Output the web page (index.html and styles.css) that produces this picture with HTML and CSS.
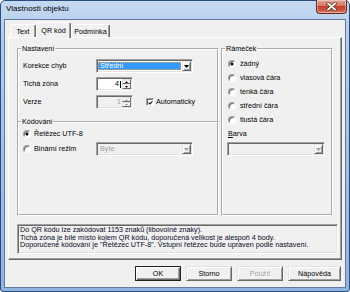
FILE: index.html
```html
<!DOCTYPE html>
<html lang="cs">
<head>
<meta charset="utf-8">
<title>Vlastnosti objektu</title>
<link rel="stylesheet" href="styles.css">
</head>
<body>
<div class="window">
  <div class="titlebar">
    <span class="title">Vlastnosti objektu</span>
    <div class="close">
      <svg width="11" height="9" viewBox="0 0 11 9"><path d="M2 1.5 L9 7.5 M9 1.5 L2 7.5" stroke="#5a2a20" stroke-width="3.2" stroke-linecap="square"/><path d="M2 1.5 L9 7.5 M9 1.5 L2 7.5" stroke="#fff" stroke-width="1.8" stroke-linecap="square"/></svg>
    </div>
  </div>
  <div class="client">
    <div class="tabs">
      <div class="tab tab-text">Text</div>
      <div class="tab tab-qr active">QR kód</div>
      <div class="tab tab-cond">Podmínka</div>
    </div>
    <div class="panel">
      <div class="groups">
        <div class="col-left">
          <fieldset class="group g-settings">
            <legend>Nastavení</legend>
            <div class="form">
              <div class="row">
                <span class="lbl">Korekce chyb</span>
                <div class="combo combo-wide">
                  <span class="val selected">Střední</span>
                  <span class="drop"><svg width="5" height="3" viewBox="0 0 5 3"><polygon points="0,0 5,0 2.5,3" fill="#000"/></svg></span>
                </div>
              </div>
              <div class="row">
                <span class="lbl">Tichá zóna</span>
                <div class="spin">
                  <span class="num">4</span><span class="caret"></span>
                  <span class="arrows">
                    <span class="arr"><svg width="3" height="2" viewBox="0 0 3 2"><polygon points="1.5,0 3,2 0,2" fill="#000"/></svg></span>
                    <span class="arr"><svg width="3" height="2" viewBox="0 0 3 2"><polygon points="0,0 3,0 1.5,2" fill="#000"/></svg></span>
                  </span>
                </div>
              </div>
              <div class="row">
                <span class="lbl">Verze</span>
                <div class="spin disabled">
                  <span class="num">1</span>
                  <span class="arrows">
                    <span class="arr"><svg width="3" height="2" viewBox="0 0 3 2"><polygon points="1.5,0 3,2 0,2" fill="#a0a0a0"/></svg></span>
                    <span class="arr"><svg width="3" height="2" viewBox="0 0 3 2"><polygon points="0,0 3,0 1.5,2" fill="#a0a0a0"/></svg></span>
                  </span>
                </div>
                <span class="checkbox"><svg width="6" height="6" viewBox="0 0 6 6"><path d="M0.8 2.6 L2.3 4.2 L5.3 1.0" stroke="#000" stroke-width="1.3" fill="none"/></svg></span>
                <span class="check-lbl">Automaticky</span>
              </div>
            </div>
          </fieldset>
          <fieldset class="group g-encoding">
            <legend>Kódování</legend>
            <div class="enc">
              <div class="rrow r-first"><span class="radio on"></span><span class="rlbl">Řetězec UTF-8</span></div>
              <div class="rrow r-combo">
                <span class="rpart"><span class="radio"></span><span class="rlbl">Binární režim</span></span>
                <div class="combo combo-wide disabled">
                  <span class="val">Byte</span>
                  <span class="drop"><svg width="5" height="3" viewBox="0 0 5 3"><polygon points="0,0 5,0 2.5,3" fill="#a0a0a0"/></svg></span>
                </div>
              </div>
            </div>
          </fieldset>
        </div>
        <fieldset class="group g-frame">
          <legend>Rámeček</legend>
          <div class="frame-list">
            <div class="frow f-first"><span class="radio on"></span><span class="rlbl">žádný</span></div>
            <div class="frow"><span class="radio"></span><span class="rlbl">vlasová čára</span></div>
            <div class="frow"><span class="radio"></span><span class="rlbl">tenká čára</span></div>
            <div class="frow"><span class="radio"></span><span class="rlbl">střední čára</span></div>
            <div class="frow"><span class="radio"></span><span class="rlbl">tlustá čára</span></div>
            <div class="frow color-lbl"><span><u>B</u>arva</span></div>
            <div class="combo combo-color disabled">
              <span class="val"></span>
              <span class="drop"><svg width="5" height="3" viewBox="0 0 5 3"><polygon points="0,0 5,0 2.5,3" fill="#a0a0a0"/></svg></span>
            </div>
          </div>
        </fieldset>
      </div>
      <div class="info">
        <div>Do QR kódu lze zakódovat 1153 znaků (libovolné znaky).</div>
        <div>Tichá zóna je bílé místo kolem QR kódu, doporučená velikost je alespoň 4 body.</div>
        <div>Doporučené kódování je "Řetězec UTF-8". Vstupní řetězec bude upraven podle nastavení.</div>
      </div>
    </div>
    <div class="buttons">
      <div class="btn default">OK</div>
      <div class="btn">Storno</div>
      <div class="btn disabled">Použít</div>
      <div class="btn btn-help">Nápověda</div>
    </div>
  </div>
</div>
</body>
</html>
```

FILE: styles.css
```css
* { box-sizing: border-box; }
html, body { margin: 0; padding: 0; background: #fff; }
body {
  font-family: "Liberation Sans", Arial, sans-serif;
  font-size: 7.2px;
  color: #000;
}
.window {
  width: 350px;
  height: 292px;
  display: flex;
  flex-direction: column;
  border: 1px solid #2a4c7e;
  border-radius: 5px 5px 3px 3px;
  background: linear-gradient(#c6d9f1, #b4cdec 12%, #9fbfe8 60%, #8fb3e2);
  padding: 0 3px 3px 3px;
}
.titlebar {
  height: 18px;
  display: flex;
  align-items: flex-start;
  flex: none;
}
.title {
  font-size: 8px;
  line-height: 8px;
  margin: 4px 0 0 2px;
  color: #000;
}
.close {
  margin-left: auto;
  margin-top: -1px;
  margin-right: -1px;
  width: 31px;
  height: 14px;
  border: 1px solid #6b2a20;
  border-top: none;
  border-radius: 0 0 4px 4px;
  background: linear-gradient(#e6a496, #d27663 45%, #c2412b 50%, #c95a44 80%, #de8a72);
  display: flex;
  align-items: center;
  justify-content: center;
  box-shadow: inset 0 0 0 1px rgba(255,255,255,0.35);
}
.close svg { display: block; }
.client {
  flex: 1;
  background: #f0f0f0;
  border: 1px solid #5f7aa2;
  padding: 2px 3px 0 3px;
  display: flex;
  flex-direction: column;
}
.tabs {
  display: flex;
  height: 15px;
  padding-left: 2px;
  flex: none;
}
.tab {
  height: 13px;
  margin-top: 2px;
  border-top: 1px solid #fff;
  border-left: 1px solid #fff;
  border-right: 1px solid #696969;
  box-shadow: inset -1px 0 0 #a0a0a0;
  border-radius: 2px 2px 0 0;
  background: #f0f0f0;
  display: flex;
  justify-content: center;
  align-items: center;
  padding-top: 2px;
  line-height: 8px;
}
.tab-text { width: 26px; }
.tab-qr { width: 35px; }
.tab-cond { width: 39px; }
.tab.active {
  height: 16px;
  margin-top: 0;
  padding-top: 0;
  position: relative;
  z-index: 1;
}
.panel {
  flex: none;
  height: 223px;
  border-top: 1px solid #fff;
  border-left: 1px solid #fff;
  border-right: 1px solid #696969;
  border-bottom: 1px solid #696969;
  box-shadow: inset -1px -1px 0 #a0a0a0;
  padding: 7px 8px 5px 8px;
  display: flex;
  flex-direction: column;
}
.groups {
  display: grid;
  grid-template-columns: 202px 112px;
  column-gap: 2px;
  height: 171px;
}
.col-left {
  display: flex;
  flex-direction: column;
}
fieldset.group {
  margin: 0;
  padding: 0;
  border: 2px groove #fff;
  min-width: 0;
}
fieldset.group legend {
  padding: 0 1px;
  margin-left: 2px;
  line-height: 8px;
  height: 8px;
  font-size: 7.2px;
}
.g-settings { border-bottom: none !important; }
.g-encoding { margin-top: -5px !important; flex: 1; }
.form {
  padding: 6px 0 14px 4px;
  display: flex;
  flex-direction: column;
  gap: 4px;
}
.row {
  height: 14px;
  display: flex;
  align-items: center;
}
.lbl { width: 73px; flex: none; line-height: 8px; }

.combo {
  height: 14px;
  border: 1px solid;
  border-color: #a0a0a0 #fff #fff #a0a0a0;
  box-shadow: inset 1px 1px 0 #696969, inset -1px -1px 0 #e3e3e3;
  background: #fff;
  display: flex;
  padding: 1px;
}
.combo-wide { width: 97px; flex: none; }
.combo.disabled { background: #f0f0f0; color: #a0a0a0; }
.combo .val {
  flex: 1;
  line-height: 8px;
  padding-left: 2px;
  margin: 1px 1px 1px 0;
  display: flex;
  align-items: center;
}
.combo .val.selected {
  background: #3399ff;
  color: #fff;
  outline: 1px dotted #f2a545;
  outline-offset: -1px;
  padding-left: 2px;
}
.combo .drop {
  width: 9px;
  flex: none;
  background: #f0f0f0;
  border: 1px solid;
  border-color: #e3e3e3 #696969 #696969 #e3e3e3;
  box-shadow: inset 1px 1px 0 #fff, inset -1px -1px 0 #a0a0a0;
  display: flex;
  align-items: center;
  justify-content: center;
}
.combo .drop svg { display: block; }

.spin {
  width: 37px;
  height: 14px;
  flex: none;
  border: 1px solid;
  border-color: #a0a0a0 #fff #fff #a0a0a0;
  box-shadow: inset 1px 1px 0 #696969, inset -1px -1px 0 #e3e3e3;
  background: #fff;
  display: flex;
  align-items: stretch;
  padding: 1px;
}
.spin.disabled { background: #f0f0f0; color: #a0a0a0; }
.spin .num {
  flex: 1;
  text-align: right;
  line-height: 10px;
  padding-right: 1px;
}
.spin .caret {
  width: 1px;
  background: #000;
  margin: 2px 1px 1px 0;
}
.spin .arrows {
  width: 9px;
  flex: none;
  display: flex;
  flex-direction: column;
}
.spin .arr {
  flex: 1;
  background: #f0f0f0;
  border: 1px solid;
  border-color: #e3e3e3 #696969 #696969 #e3e3e3;
  display: flex;
  align-items: center;
  justify-content: center;
}
.spin .arr svg { display: block; }

.checkbox {
  width: 8px;
  height: 8px;
  margin-left: 13px;
  flex: none;
  border: 1px solid;
  border-color: #a0a0a0 #fff #fff #a0a0a0;
  box-shadow: inset 1px 1px 0 #696969;
  background: #fff;
  display: flex;
  align-items: center;
  justify-content: center;
}
.checkbox svg { display: block; margin: 1px 0 0 1px; }
.check-lbl { margin-left: 2px; line-height: 8px; }

.radio {
  width: 8px;
  height: 8px;
  flex: none;
  border-radius: 50%;
  border: 1px solid;
  border-color: #a0a0a0 #fff #fff #a0a0a0;
  box-shadow: inset 1px 1px 0 #696969;
  background: #fff;
  display: flex;
  align-items: center;
  justify-content: center;
}
.radio.on::after {
  content: "";
  width: 2px;
  height: 2px;
  border-radius: 50%;
  background: #000;
  box-shadow: 0 0 0 0.5px #000;
}
.rlbl { margin-left: 3px; line-height: 8px; }

.enc {
  padding: 3px 0 0 4px;
  display: flex;
  flex-direction: column;
  gap: 3px;
}
.rrow { display: flex; align-items: center; }
.r-first { height: 10px; }
.r-combo { height: 14px; }
.rpart { width: 73px; flex: none; display: flex; align-items: center; }

.frame-list {
  padding: 3px 0 0 5px;
  display: flex;
  flex-direction: column;
}
.frow { height: 14px; display: flex; align-items: center; }
.frow .rlbl { margin-left: 4px; }
.frow.f-first { height: 15px; }
.color-lbl { line-height: 8px; padding-left: 0; }
.combo-color { width: 98px; margin-left: -1px; margin-top: 1px; }

.info {
  margin-top: 8px;
  margin-right: -5px;
  height: 30px;
  border: 1px solid;
  border-color: #a0a0a0 #fff #fff #a0a0a0;
  box-shadow: inset 1px 1px 0 #696969, inset -1px -1px 0 #e3e3e3;
  background: #f0f0f0;
  padding: 1px 2px 0 2px;
  line-height: 7.5px;
  color: #0a0a1e;
  white-space: nowrap;
  overflow: hidden;
}

.buttons {
  display: flex;
  justify-content: flex-end;
  gap: 5px;
  margin-top: 6px;
  padding-right: 1px;
}
.btn {
  width: 46px;
  height: 15px;
  border: 1px solid;
  border-color: #e3e3e3 #696969 #696969 #e3e3e3;
  box-shadow: inset 1px 1px 0 #fff, inset -1px -1px 0 #a0a0a0;
  background: #f0f0f0;
  display: flex;
  align-items: center;
  justify-content: center;
  line-height: 8px;
}
.btn.default {
  border: 1px solid #222;
  box-shadow: inset 1px 1px 0 #fff, inset -1px -1px 0 #696969, inset -2px -2px 0 #a0a0a0;
}
.btn.disabled {
  color: #a0a0a0;
  text-shadow: 1px 1px 0 #fff;
}
.btn-help { width: 53px; }
```
